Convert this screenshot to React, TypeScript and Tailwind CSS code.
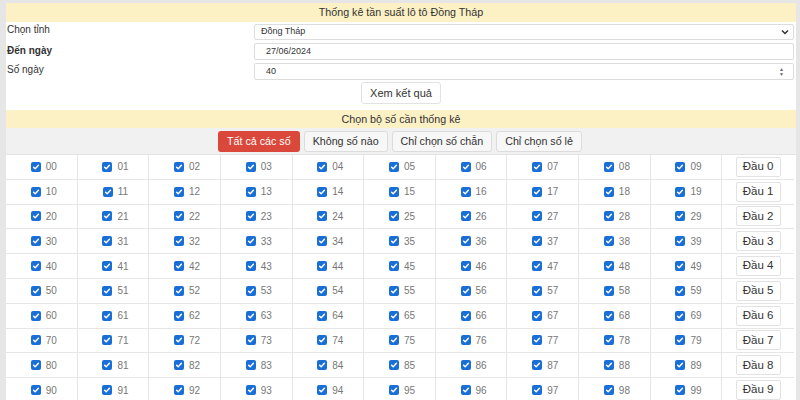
import React from 'react';

const rows = Array.from({ length: 10 }, (_, r) => r);
const cols = Array.from({ length: 10 }, (_, c) => c);

function Check() {
  return (
    <span className="inline-flex items-center justify-center w-[10px] h-[10px] rounded-[2px] bg-[#1a6fd6]">
      <svg width="8" height="8" viewBox="0 0 10 10" fill="none">
        <path d="M2 5.2l2 2 4-4.4" stroke="white" strokeWidth="1.8" strokeLinecap="round" strokeLinejoin="round" />
      </svg>
    </span>
  );
}

export default function App() {
  return (
    <div
      className="w-[800px] h-[400px] overflow-hidden bg-[#e6e6e6] pl-[6px] pr-[4px] pt-[3px]"
      style={{ fontFamily: '"Liberation Sans", Arial, sans-serif' }}
    >
      <div className="bg-white h-full">
        {/* Header */}
        <div className="h-[19px] bg-[#fcf0c5] flex items-center justify-center text-[10.7px] text-[#333]">
          Thống kê tần suất lô tô Đồng Tháp
        </div>

        {/* Form */}
        <div className="grid grid-cols-[248px_1fr] pr-[2px] text-[10px] text-[#333]">
          <div className="h-[20px] pl-[1px]">Chọn tỉnh</div>
          <div className="h-[20px] pt-[2px]">
            <div className="h-[16px] border border-[#ddd] rounded-[2px] flex items-center justify-between pl-[6px] pr-[4px] text-[9px]">
              <span>Đồng Tháp</span>
              <svg width="8" height="6" viewBox="0 0 8 6" fill="none">
                <path d="M1 1.5l3 3 3-3" stroke="#333" strokeWidth="1.5" />
              </svg>
            </div>
          </div>
          <div className="h-[20px] pl-[1px] pt-[1px] font-bold">Đến ngày</div>
          <div className="h-[20px] pt-[1px]">
            <div className="h-[17px] border border-[#ddd] rounded-[2px] flex items-center pl-[11px] text-[9px]">
              27/06/2024
            </div>
          </div>
          <div className="h-[20px] pl-[1px]">Số ngày</div>
          <div className="h-[20px] pt-[1px]">
            <div className="h-[17px] border border-[#ddd] rounded-[2px] flex items-center justify-between pl-[11px] pr-[9px] text-[9px]">
              <span>40</span>
              <span className="flex flex-col items-center leading-none text-[5px] text-[#666]">
                <span>▲</span>
                <span>▼</span>
              </span>
            </div>
          </div>
        </div>

        {/* Submit */}
        <div className="h-[28px] flex justify-center items-start">
          <button className="h-[22px] px-[8px] border border-[#e2e2e2] rounded-[3px] bg-white text-[11px] text-[#333]">
            Xem kết quả
          </button>
        </div>

        {/* Second header */}
        <div className="h-[18px] bg-[#fcf0c5] flex items-center justify-center text-[10.7px] text-[#333]">
          Chọn bộ số cần thống kê
        </div>

        {/* Filter buttons */}
        <div className="h-[26px] bg-[#f1f1f1] flex items-center justify-center gap-[4px] pr-[2px] text-[10.7px]">
          <button className="h-[21px] px-[9px] rounded-[3px] bg-[#d9483b] text-white">Tất cả các số</button>
          <button className="h-[21px] px-[8px] rounded-[3px] bg-[#f7f7f7] border border-[#dcdcdc] text-[#333]">Không số nào</button>
          <button className="h-[21px] px-[8px] rounded-[3px] bg-[#f7f7f7] border border-[#dcdcdc] text-[#333]">Chỉ chọn số chẵn</button>
          <button className="h-[21px] px-[8px] rounded-[3px] bg-[#f7f7f7] border border-[#dcdcdc] text-[#333]">Chỉ chọn số lẻ</button>
        </div>

        {/* Number grid */}
        <div className="border-t border-[#e3e3e3] pr-[2px]">
          {rows.map((r) => (
            <div key={r} className="grid grid-cols-11 h-[24.8px] border-b border-[#e6e6e6]">
              {cols.map((c) => (
                <div key={c} className="flex items-center justify-center gap-[5px] pl-[5px] border-r border-[#e6e6e6] text-[10px] text-[#777]">
                  <Check />
                  <span>{`${r}${c}`}</span>
                </div>
              ))}
              <div className="flex items-center justify-center">
                <button className="h-[20px] px-[6px] border border-[#e2e2e2] rounded-[2px] bg-white text-[11.5px] text-[#333]">
                  Đầu {r}
                </button>
              </div>
            </div>
          ))}
        </div>
      </div>
    </div>
  );
}
